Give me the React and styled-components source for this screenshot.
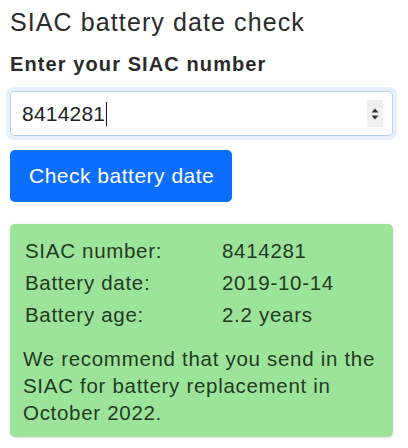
import React from "react"
import styled, { createGlobalStyle } from "styled-components"

const GlobalStyle = createGlobalStyle`
  body {
    margin: 0;
    background: #fff;
    font-family: "Liberation Sans", Arial, sans-serif;
    color: #212529;
  }
`

const Page = styled.main`
  padding: 6px 15px 10px 10px;
  display: flex;
  flex-direction: column;
`

const Title = styled.h1`
  margin: 0;
  font-size: 25px;
  font-weight: normal;
  line-height: 32px;
  letter-spacing: 1.1px;
  color: #2b2b2b;
`

const Label = styled.label`
  margin-top: 14px;
  font-size: 20px;
  font-weight: bold;
  line-height: 24px;
  letter-spacing: 1.1px;
  color: #2b2b2b;
`

const InputWrap = styled.div`
  margin-top: 15px;
  height: 45px;
  display: flex;
  align-items: center;
  border: 1px solid #b8d0f5;
  border-radius: 4px;
  box-shadow: 0 0 0 4px rgba(13, 110, 253, 0.1);
  padding: 0 9px 0 11px;
  box-sizing: border-box;
`

const NumberText = styled.span`
  font-size: 21px;
  letter-spacing: 0.2px;
  color: #222;
  line-height: 24px;
`

const Caret = styled.span`
  display: inline-block;
  width: 1px;
  height: 24px;
  background: #111;
  margin-left: 1px;
`

const Spacer = styled.div`
  flex: 1;
`

const Spinner = styled.div`
  width: 16px;
  height: 27px;
  background: #f0f0f0;
  display: flex;
  align-items: center;
  justify-content: center;
`

const Button = styled.button`
  align-self: flex-start;
  margin-top: 14px;
  height: 52px;
  padding: 0 18px 0 19px;
  border: none;
  border-radius: 5px;
  background: #0d6efd;
  color: #fff;
  font-family: "Liberation Sans", Arial, sans-serif;
  font-size: 21px;
  letter-spacing: 0.5px;
`

const ResultBox = styled.section`
  margin-top: 22px;
  background: #9de49b;
  border-radius: 5px;
  box-shadow: 0 1px 3px rgba(0, 0, 0, 0.12);
  padding: 11px 14px 11px 13px;
  color: #233a23;
  font-size: 20.5px;
  letter-spacing: 0.7px;
`

const Row = styled.div`
  display: grid;
  grid-template-columns: 197px 1fr;
  line-height: 32px;
  padding-left: 2px;
`

const Note = styled.p`
  margin: 14px 0 0;
  line-height: 27px;
`

const rows = [
  ["SIAC number:", "8414281"],
  ["Battery date:", "2019-10-14"],
  ["Battery age:", "2.2 years"],
]

const App = () => (
  <>
    <GlobalStyle />
    <Page>
      <Title>SIAC battery date check</Title>
      <Label>Enter your SIAC number</Label>
      <InputWrap>
        <NumberText>8414281</NumberText>
        <Caret />
        <Spacer />
        <Spinner>
          <svg width="10" height="16" viewBox="0 0 10 16">
            <path d="M1.5 6.5 L5 2.5 L8.5 6.5 Z" fill="#333" />
            <path d="M1.5 9.5 L5 13.5 L8.5 9.5 Z" fill="#333" />
          </svg>
        </Spinner>
      </InputWrap>
      <Button>Check battery date</Button>
      <ResultBox>
        {rows.map(([k, v]) => (
          <Row key={k}>
            <span>{k}</span>
            <span>{v}</span>
          </Row>
        ))}
        <Note>
          We recommend that you send in the SIAC for battery replacement in
          October 2022.
        </Note>
      </ResultBox>
    </Page>
  </>
)

export default App
